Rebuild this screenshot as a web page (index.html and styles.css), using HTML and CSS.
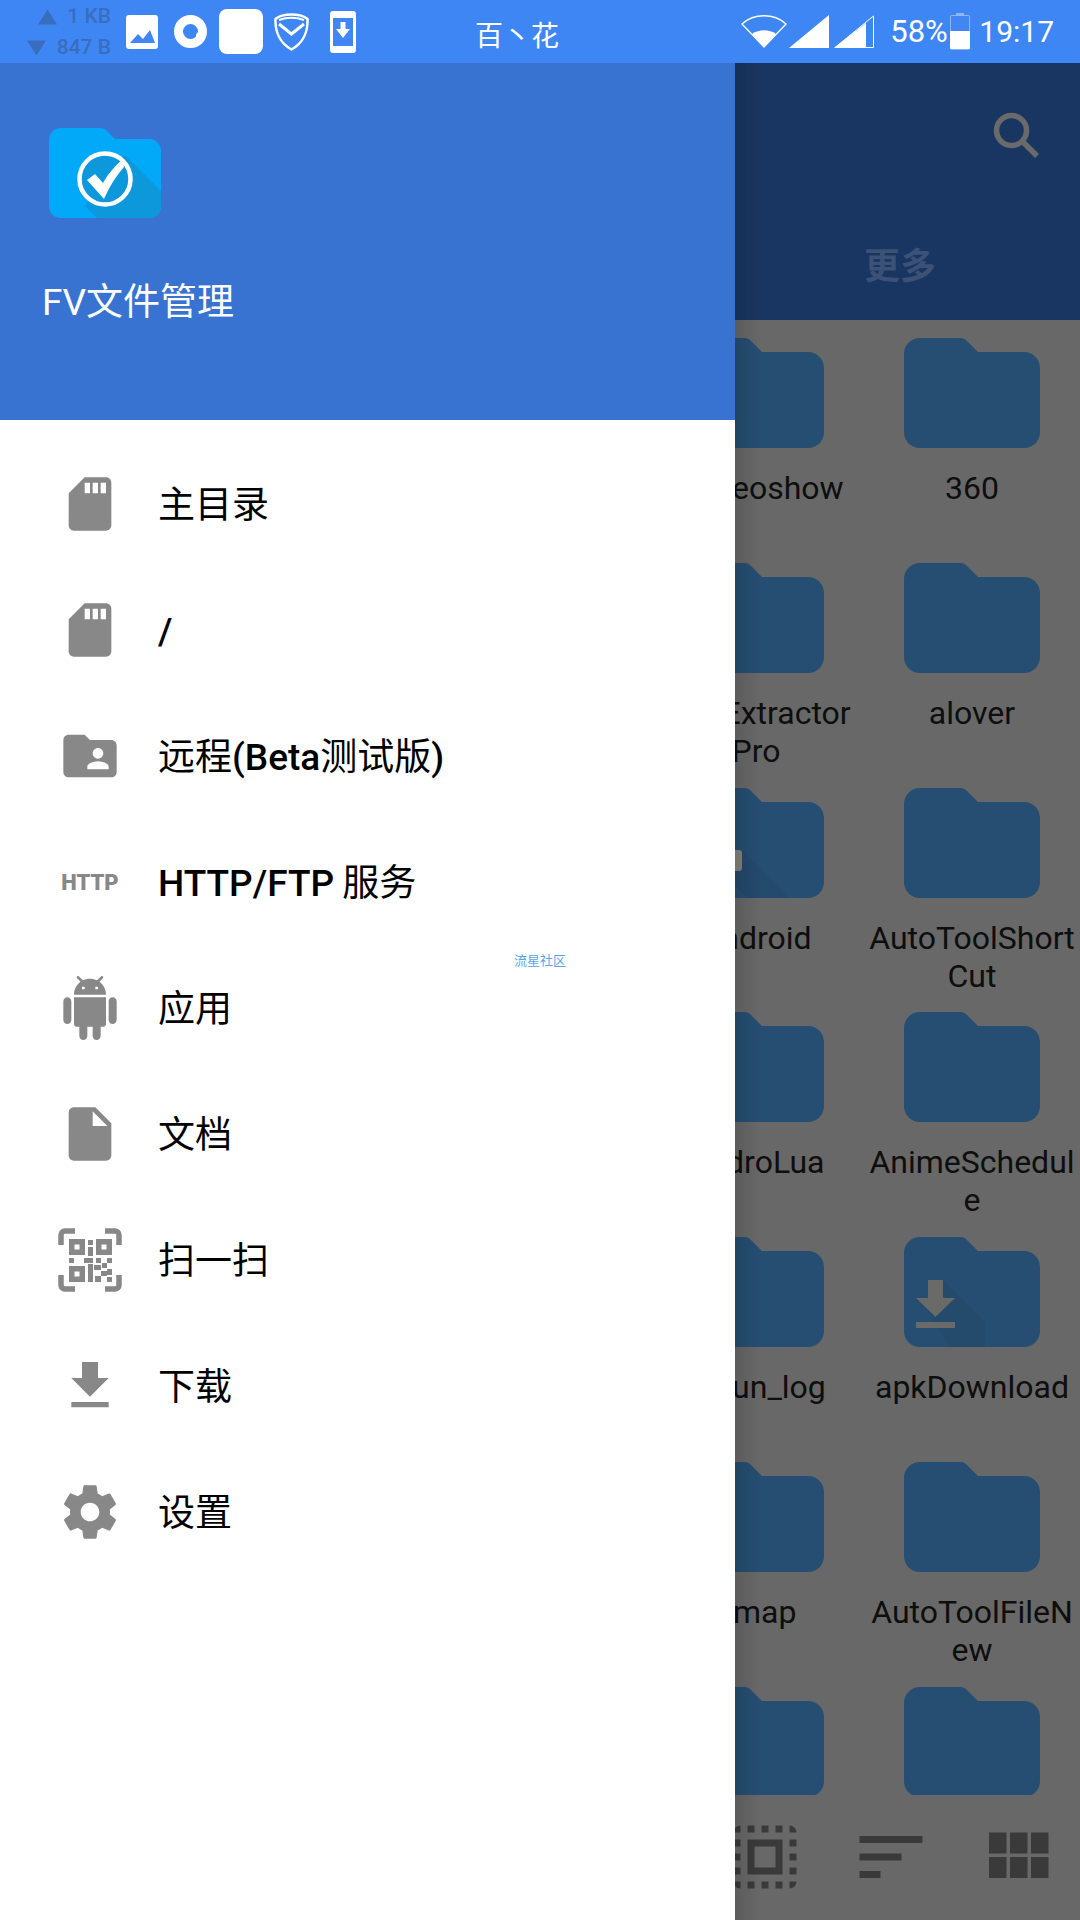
FILE: index.html
```html
<!DOCTYPE html>
<html lang="zh">
<head>
<meta charset="utf-8">
<title>FV文件管理</title>
<link rel="stylesheet" href="styles.css">
</head>
<body>
<div class="phone">
  <header class="status">
    <div class="speed">
      <div class="speed-row"><svg class="tri" viewBox="0 0 20 16"><path d="M10 0l10 16H0z"/></svg><span>1 KB</span></div>
      <div class="speed-row"><svg class="tri" viewBox="0 0 20 16"><path d="M0 0h20L10 16z"/></svg><span>847 B</span></div>
    </div>
    <div class="notify">
      <svg class="ni-pic" viewBox="0 0 32 34"><rect width="32" height="34" rx="3" fill="#fff"/><path d="M4 28l8-9 5 5 7-9 5 13z" fill="#4285f4"/></svg>
      <svg class="ni-ring" viewBox="0 0 33 33"><circle cx="16.5" cy="16.5" r="12" fill="none" stroke="#fff" stroke-width="9"/><circle cx="26" cy="21" r="4" fill="#fff"/></svg>
      <div class="ni-square"></div>
      <svg class="ni-shield" viewBox="0 0 35 38"><path d="M17.5 1.5C24 1.5 30 3 33.500 6c.5 12-4 24-16 30.500C5.500 30 1 18 1.500 6 5 3 11 1.500 17.500 1.500z" fill="none" stroke="#fff" stroke-width="2.500"/><path d="M5 11l12.500 10L30 11" fill="none" stroke="#fff" stroke-width="3"/><path d="M5 7c8-3 17-3 25 0" fill="none" stroke="#fff" stroke-width="2"/></svg>
      <svg class="ni-phone" viewBox="0 0 26 42"><rect width="26" height="42" rx="3" fill="#fff"/><rect x="3" y="7" width="20" height="28" fill="#4285f4"/><path d="M10.500 11h5v7h4.500L13 27 6 18h4.500z" fill="#fff"/></svg>
    </div>
    <div class="carrier">百丶花</div>
    <div class="sys">
      <svg class="si-wifi" viewBox="0 0 46 33"><path d="M23 32L1 9C13-2 33-2 45 9z" fill="none" stroke="#fff" stroke-width="1.300"/><path d="M23 32L11 19c7-5 17-5 24 0z" fill="#fff"/></svg>
      <svg class="si-sig" viewBox="0 0 40 33"><path d="M40 0v33H0z" fill="#fff"/></svg>
      <svg class="si-sig" viewBox="0 0 40 33"><path d="M39.500 1v31.500H1z" fill="none" stroke="#fff" stroke-width="1"/><path d="M32 8v25H0z" fill="#fff"/></svg>
      <span class="si-text si-pct">58%</span>
      <svg class="si-bat" viewBox="0 0 20 37"><path d="M6 0h8v2h4a2 2 0 0 1 2 2v31a2 2 0 0 1-2 2H2a2 2 0 0 1-2-2V4a2 2 0 0 1 2-2h4z" fill="#8fb6f8"/><path d="M1 3h18v15H1z" fill="#4285f4"/><path d="M0 18h20v17a1 1 0 0 1-1 1H1a1 1 0 0 1-1-1z" fill="#fff"/></svg>
      <span class="si-text si-time">19:17</span>
    </div>
  </header>

  <div class="app">
    <div class="toolbar">
      <svg class="search" viewBox="0 0 48 48"><circle cx="19.500" cy="19.500" r="15" fill="none" stroke="#6a6a6a" stroke-width="5.500"/><path d="M30.500 30.500L45 45" stroke="#6a6a6a" stroke-width="5.500"/></svg>
      <div class="tab">更多</div>
    </div>
    <div class="files">
      <div class="file"><svg class="folder"><use href="#folder"/></svg><div class="name">aVideoshow</div></div>
      <div class="file"><svg class="folder"><use href="#folder"/></svg><div class="name">360</div></div>
      <div class="file"><svg class="folder"><use href="#folder"/></svg><div class="name">APKExtractor Pro</div></div>
      <div class="file"><svg class="folder"><use href="#folder"/></svg><div class="name">alover</div></div>
      <div class="file">
        <svg class="folder" viewBox="0 0 136 110">
          <use href="#folder"/>
          <path class="cast" d="M54 62l48 48H60L30 83z"/>
          <rect x="30" y="62" width="24" height="21" rx="3" fill="#83827e"/>
        </svg>
        <div class="name">Android</div>
      </div>
      <div class="file"><svg class="folder"><use href="#folder"/></svg><div class="name">AutoToolShortCut</div></div>
      <div class="file"><svg class="folder"><use href="#folder"/></svg><div class="name">AndroLua</div></div>
      <div class="file"><svg class="folder"><use href="#folder"/></svg><div class="name">AnimeSchedule</div></div>
      <div class="file"><svg class="folder"><use href="#folder"/></svg><div class="name">anrun_log</div></div>
      <div class="file">
        <svg class="folder" viewBox="0 0 136 110">
          <use href="#folder"/>
          <path class="cast" d="M39 43l42 42v25H46L24 74z"/>
          <path d="M24 43h15v18h12L31.500 80 12 61h12zM12 85h39v6H12z" fill="#6a6a68"/>
        </svg>
        <div class="name">apkDownload</div>
      </div>
      <div class="file"><svg class="folder"><use href="#folder"/></svg><div class="name">amap</div></div>
      <div class="file"><svg class="folder"><use href="#folder"/></svg><div class="name">AutoToolFileNew</div></div>
      <div class="file"><svg class="folder"><use href="#folder"/></svg><div class="name"></div></div>
      <div class="file"><svg class="folder"><use href="#folder"/></svg><div class="name"></div></div>
    </div>
    <div class="actions">
      <svg class="action" viewBox="0 0 24 24"><path d="M3 5h2V3c-1.100 0-2 .9-2 2zm0 8h2v-2H3v2zm4 8h2v-2H7v2zM3 9h2V7H3v2zm10-6h-2v2h2V3zm6 0v2h2c0-1.100-.9-2-2-2zM5 21v-2H3c0 1.100.9 2 2 2zm-2-4h2v-2H3v2zM9 3H7v2h2V3zm2 18h2v-2h-2v2zm8-8h2v-2h-2v2zm0 8c1.100 0 2-.9 2-2h-2v2zm0-12h2V7h-2v2zm0 8h2v-2h-2v2zm-4 4h2v-2h-2v2zm0-16h2V3h-2v2zM7 17h10V7H7v10zm2-8h6v6H9V9z"/></svg>
      <svg class="action" viewBox="0 0 24 24"><path d="M3 18h6v-2H3v2zM3 6v2h18V6H3zm0 7h12v-2H3v2z"/></svg>
      <svg class="action" viewBox="0 0 24 24"><path d="M4 11h5V5H4v6zm0 7h5v-6H4v6zm6 0h5v-6h-5v6zm6 0h5v-6h-5v6zm-6-7h5V5h-5v6zm6-6v6h5V5h-5z"/></svg>
    </div>
  </div>

  <aside class="drawer">
    <div class="drawer-head">
      <svg class="logo" viewBox="0 0 112 90">
        <path d="M12 0h39c3 0 5 1 7 3l8 8h34c7 0 12 5 12 12v55c0 7-5 12-12 12H12C5 90 0 85 0 78V12C0 5 5 0 12 0z" fill="#03a9f9"/>
        <path d="M76 27l36 36v15c0 7-5 12-12 12H48L36 78z" fill="#0d98dc"/>
        <circle cx="56" cy="51" r="25.500" fill="#0d98dc" stroke="#fff" stroke-width="4.500"/>
        <path d="M38 52l8-6 8 9c5-9 11-16 20-24l1 8C67 48 61 58 55 71z" fill="#fff"/>
      </svg>
      <div class="app-name">FV文件管理</div>
    </div>
    <nav class="menu">
      <div class="item"><svg class="ico" viewBox="0 0 24 24"><path d="M18 2h-8L4.020 8 4 20c0 1.100.9 2 2 2h12c1.100 0 2-.9 2-2V4c0-1.100-.9-2-2-2zm-6 6h-2V4h2v4zm3 0h-2V4h2v4zm3 0h-2V4h2v4z"/></svg><span class="label">主目录</span></div>
      <div class="item"><svg class="ico" viewBox="0 0 24 24"><path d="M18 2h-8L4.020 8 4 20c0 1.100.9 2 2 2h12c1.100 0 2-.9 2-2V4c0-1.100-.9-2-2-2zm-6 6h-2V4h2v4zm3 0h-2V4h2v4zm3 0h-2V4h2v4z"/></svg><span class="label"><b class="lat">/</b></span></div>
      <div class="item"><svg class="ico" viewBox="0 0 24 24"><path d="M20 6h-8l-2-2H4c-1.100 0-1.990.9-1.990 2L2 18c0 1.100.9 2 2 2h16c1.100 0 2-.9 2-2V8c0-1.100-.9-2-2-2zm-5 3c1.100 0 2 .9 2 2s-.9 2-2 2-2-.9-2-2 .9-2 2-2zm4 8h-8v-1c0-1.330 2.670-2 4-2s4 .67 4 2v1z"/></svg><span class="label">远程<b class="lat">(Beta</b>测试版<b class="lat">)</b></span></div>
      <div class="item"><div class="ico http">HTTP</div><span class="label"><b class="lat">HTTP/FTP</b> 服务</span></div>
      <div class="item"><svg class="ico" viewBox="0 0 24 24"><path d="M6 18c0 .55.45 1 1 1h1v3.500c0 .83.67 1.500 1.500 1.500s1.500-.67 1.500-1.500V19h2v3.500c0 .83.67 1.500 1.500 1.500s1.500-.67 1.500-1.500V19h1c.55 0 1-.45 1-1V8H6v10zM3.500 8C2.670 8 2 8.670 2 9.500v7c0 .83.67 1.500 1.500 1.500S5 17.330 5 16.500v-7C5 8.670 4.330 8 3.500 8zm17 0c-.83 0-1.500.67-1.500 1.500v7c0 .83.67 1.500 1.500 1.500s1.500-.67 1.500-1.500v-7c0-.83-.67-1.500-1.500-1.500zm-4.970-5.840l1.300-1.300c.2-.2.2-.51 0-.71-.2-.2-.51-.2-.71 0l-1.480 1.480C13.850 1.230 12.950 1 12 1c-.96 0-1.860.23-2.660.63L7.850.15c-.2-.2-.51-.2-.71 0-.2.2-.2.51 0 .71l1.310 1.310C6.970 3.260 6 5.010 6 7h12c0-1.990-.97-3.750-2.470-4.840zM10 5H9V4h1v1zm5 0h-1V4h1v1z"/></svg><span class="label">应用</span><span class="mark">流星社区</span></div>
      <div class="item"><svg class="ico" viewBox="0 0 24 24"><path d="M6 2c-1.100 0-1.990.9-1.990 2L4 20c0 1.100.89 2 1.990 2H18c1.100 0 2-.9 2-2V8l-6-6H6zm7 7V3.500L18.500 9H13z"/></svg><span class="label">文档</span></div>
      <div class="item">
        <svg class="ico" viewBox="0 0 64 64">
          <path d="M3 17V7a4 4 0 0 1 4-4h10M47 3h10a4 4 0 0 1 4 4v10M61 47v10a4 4 0 0 1-4 4H47M17 61H7a4 4 0 0 1-4-4V47" fill="none" stroke="#888" stroke-width="5.500"/>
          <path fill-rule="evenodd" d="M11 11h16v16H11zm5.500 5.500v5h5v-5zM38 11h16v16H38zm5.500 5.500v5h5v-5zM11 38h16v16H11zm5.500 5.500v5h5v-5zM30 12h5v5h-5zM30 19h5v9h-5zM11 30h5v5h-5zM26 30h9v5h-9zM38 30h5v5h-5zM49 30h5v5h-5zM30 36h5v18h-5zM36 37h7v5h-7zM44 35h5v5h-5zM49 41h5v6h-5zM43 43h6v5h-6zM37 48h6v6h-6zM49 49h5v5h-5z"/>
        </svg>
        <span class="label">扫一扫</span>
      </div>
      <div class="item"><svg class="ico" viewBox="0 0 24 24"><path d="M19 9h-4V3H9v6H5l7 7 7-7zM5 18v2h14v-2H5z"/></svg><span class="label">下载</span></div>
      <div class="item"><svg class="ico" viewBox="0 0 24 24"><path d="M19.430 12.980c.04-.32.07-.64.07-.98s-.03-.66-.07-.98l2.110-1.650c.19-.15.24-.42.12-.64l-2-3.460c-.12-.22-.39-.3-.61-.22l-2.490 1c-.52-.4-1.080-.73-1.690-.98l-.38-2.650C14.460 2.180 14.250 2 14 2h-4c-.25 0-.46.18-.49.42l-.38 2.650c-.61.25-1.170.59-1.690.98l-2.490-1c-.23-.09-.49 0-.61.22l-2 3.460c-.13.22-.07.49.12.64l2.110 1.650c-.04.32-.07.65-.07.98s.03.66.07.98l-2.110 1.650c-.19.15-.24.42-.12.64l2 3.460c.12.22.39.3.61.22l2.490-1c.52.4 1.080.73 1.690.98l.38 2.650c.03.24.24.42.49.42h4c.25 0 .46-.18.49-.42l.38-2.650c.61-.25 1.170-.59 1.690-.98l2.490 1c.23.09.49 0 .61-.22l2-3.460c.12-.22.07-.49-.12-.64l-2.110-1.650zM12 15.500c-1.930 0-3.500-1.570-3.500-3.500s1.570-3.500 3.500-3.500 3.500 1.570 3.500 3.500-1.570 3.500-3.500 3.500z"/></svg><span class="label">设置</span></div>
    </nav>
  </aside>

  <!-- shared folder shape -->
  <svg class="defs" aria-hidden="true"><symbol id="folder" viewBox="0 0 136 110"><path d="M16 0h41c2 0 4 1 6 3l11 11h46c9 0 16 7 16 16v64c0 9-7 16-16 16H16c-9 0-16-7-16-16V16C0 7 7 0 16 0z"/></symbol></svg>
</div>
</body>
</html>
```

FILE: styles.css
```css
* { box-sizing: border-box; }
html, body { margin: 0; padding: 0; }
body { width: 1080px; height: 1920px; overflow: hidden; background: #686868; font-family: Roboto, "Noto Sans CJK SC", sans-serif; }

.phone { position: relative; width: 1080px; height: 1920px; overflow: hidden; display: flex; flex-direction: column; background: #686868; }
.defs { position: absolute; width: 0; height: 0; }

/* status bar */
.status { position: relative; z-index: 3; flex: none; height: 63px; background: #3f86f5; display: flex; align-items: center; padding-left: 27px; }
.speed { width: 84px; flex: none; color: #386ebd; font-size: 21px; font-weight: 500; line-height: 33px; }
.speed-row { display: flex; justify-content: space-between; align-items: center; height: 32px; }
.speed-row:first-child { padding: 2px 0 0 11px; }
.speed-row span { white-space: nowrap; }
.tri { width: 19px; height: 16px; fill: #386ebd; }
.notify { display: flex; align-items: center; gap: 16px; margin-left: 15px; }
.ni-pic { width: 32px; height: 34px; }
.ni-ring { width: 33px; height: 33px; }
.ni-square { width: 44px; height: 45px; border-radius: 8px; background: #fff; margin: 0 -5px 0 -4px; }
.ni-shield { width: 35px; height: 38px; }
.ni-phone { width: 26px; height: 42px; margin-left: 5px; }
.carrier { position: absolute; left: 475px; top: 14px; color: #fff; font-size: 28px; line-height: 40px; font-family: "Noto Sans CJK SC", sans-serif; font-weight: 400; }
.sys { margin-left: auto; display: flex; align-items: center; padding-right: 26px; color: #fff; }
.si-wifi { width: 46px; height: 33px; }
.si-sig { width: 40px; height: 33px; margin-left: 2px; }
.si-sig + .si-sig { margin-left: 5px; }
.si-text { font-size: 30px; line-height: 36px; margin-left: 16px; }
.si-pct { font-size: 31px; }
.si-bat { width: 20px; height: 37px; margin-left: 2px; }
.si-time { margin-left: 9.5px; }

/* file browser behind the drawer */
.app { flex: 1; display: flex; flex-direction: column; min-height: 0; }
.toolbar { position: relative; flex: none; height: 257px; background: #193662; }
.search { position: absolute; left: 992px; top: 48px; width: 48px; height: 48px; }
.tab { position: absolute; left: 864px; top: 176px; width: 72px; color: #3b5175; font-size: 36px; font-weight: 700; line-height: 48px; font-family: "Noto Sans CJK SC", sans-serif; white-space: nowrap; }
.files { flex: none; height: 1475px; overflow: hidden; padding: 18px 0 0 648px; display: grid; grid-template-columns: 216px 216px; grid-auto-rows: 224.8px; }
.file { display: flex; flex-direction: column; align-items: center; }
.folder { width: 136px; height: 110px; flex: none; fill: #264e72; }
.cast { fill: #000; fill-opacity: .05; }
.name { width: 210px; margin-top: 21px; text-align: center; color: #0e0e0e; font-size: 32px; line-height: 38px; overflow-wrap: anywhere; }
.actions { flex: none; display: flex; justify-content: flex-end; gap: 42px; padding: 20px 21px 0 0; }
.action { width: 84px; height: 84px; fill: #3a3a3a; }

/* navigation drawer */
.drawer { position: absolute; left: 0; top: 63px; bottom: 0; width: 735px; background: #fff; display: flex; flex-direction: column; z-index: 2; }
.drawer::after { content: ""; position: absolute; left: 100%; top: 0; bottom: 0; width: 26px; background: linear-gradient(to right, rgba(0,0,0,.12), rgba(0,0,0,0)); }
.drawer-head { flex: none; height: 357px; background: #3973d1; padding: 65px 0 0 42px; }
.logo { display: block; width: 112px; height: 90px; margin-left: 7px; }
.app-name { margin-top: 60px; color: #fff; font-size: 37px; line-height: 50px; }
.menu { padding-top: 21px; }
.item { position: relative; height: 126px; display: flex; align-items: center; padding-left: 58px; }
.ico { width: 64px; height: 64px; flex: none; fill: #888; }
.http { display: flex; align-items: center; justify-content: center; color: #888; font-size: 22px; font-weight: 900; font-family: Roboto, sans-serif; }
.label { margin-left: 36px; margin-bottom: 5px; color: #000; font-size: 37px; line-height: 50px; font-family: "Noto Sans CJK SC", sans-serif; white-space: nowrap; }
.lat { font-family: Roboto, sans-serif; font-weight: 500; line-height: 0; }
.mark { position: absolute; left: 514px; top: 6px; color: #5aa5e8; font-size: 13px; line-height: 18px; font-family: "Noto Sans CJK SC", sans-serif; }
```
